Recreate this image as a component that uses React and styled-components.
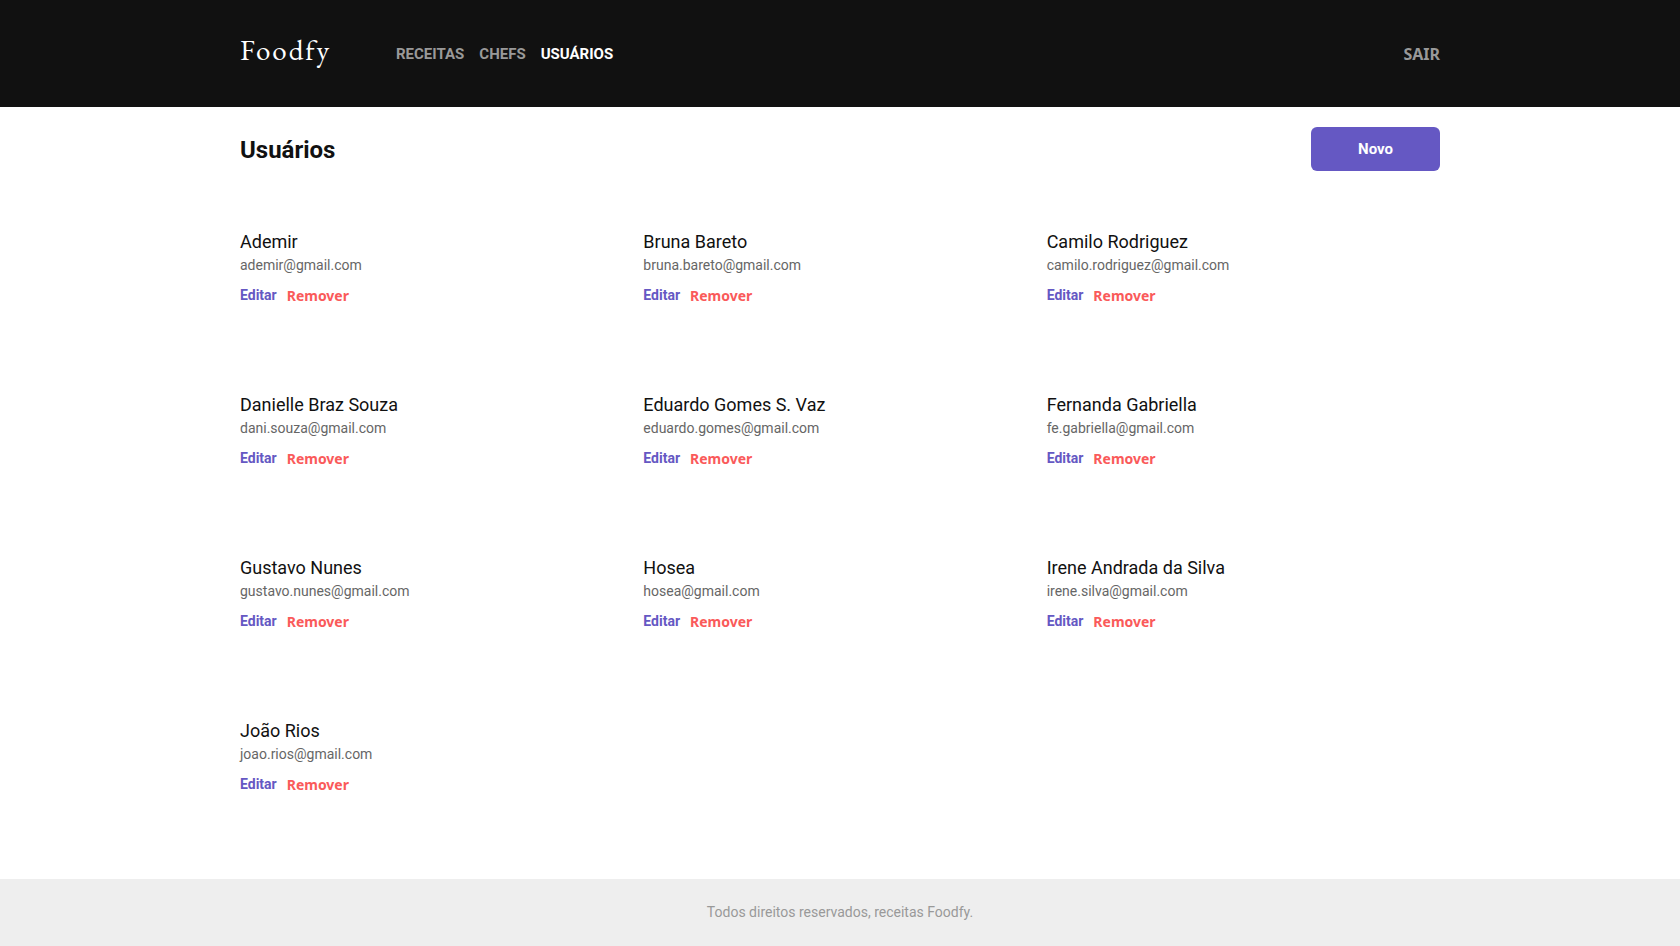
import React from "react";
import styled, { createGlobalStyle } from "styled-components";

const GlobalStyle = createGlobalStyle`
  * { margin: 0; padding: 0; box-sizing: border-box; }
  body {
    background: #fff;
    color: #111;
    font-family: Roboto, "Liberation Sans", sans-serif;
  }
  a { text-decoration: none; }
  button { border: 0; background: none; cursor: pointer; }
`;

const Page = styled.div`
  min-height: 100vh;
  display: flex;
  flex-direction: column;
`;

const Container = styled.div`
  width: 100%;
  max-width: 1200px;
  margin: 0 auto;
`;

const Header = styled.header`
  background: #111;
  padding: 32px 0 31px;
`;

const HeaderRow = styled(Container)`
  display: flex;
  align-items: center;
  min-height: 44px;
`;

const Logo = styled.a`
  align-self: flex-start;
  width: 156px;
  color: #fff;
  font-family: "EB Garamond", "Liberation Serif", serif;
  font-size: 29px;
  line-height: 36px;
  letter-spacing: 2px;
`;

const Nav = styled.nav`
  display: flex;
  flex: 1;
  gap: 15px;
`;

const NavLink = styled.a`
  color: ${({ $active }) => ($active ? "#fff" : "#999")};
  font-size: 15px;
  font-weight: 700;
  line-height: 20px;
`;

const LogoutButton = styled.button`
  color: #999;
  font-family: Tahoma, "Noto Sans", sans-serif;
  font-size: 16px;
  font-weight: 700;
  line-height: 20px;
`;

const Main = styled.main`
  flex: 1;
`;

const TitleRow = styled(Container)`
  display: flex;
  align-items: center;
  justify-content: space-between;
  padding: 20px 0;
`;

const Title = styled.h1`
  padding-top: 2px;
  font-size: 24px;
  font-weight: 700;
  line-height: 28px;
`;

const NewLink = styled.a`
  width: 129px;
  padding: 12px 0;
  border-radius: 6px;
  background: #6558c3;
  color: #fff;
  font-size: 15px;
  font-weight: 700;
  line-height: 20px;
  text-align: center;
`;

const UserGrid = styled(Container).attrs({ as: "ul" })`
  display: grid;
  grid-template-columns: repeat(3, 1fr);
  gap: 10px;
  padding-top: 40px;
  list-style: none;
`;

const UserCard = styled.li`
  min-height: 153px;
`;

const UserName = styled.h2`
  font-size: 18px;
  font-weight: 400;
  line-height: 21px;
`;

const UserEmail = styled.p`
  margin-top: 4px;
  color: #666;
  font-size: 14px;
  line-height: 18px;
`;

const Actions = styled.div`
  display: flex;
  align-items: flex-start;
  gap: 10px;
  margin-top: 11px;
`;

const EditLink = styled.a`
  color: #6558c3;
  font-size: 14px;
  font-weight: 700;
  line-height: 20px;
`;

const RemoveButton = styled.button`
  color: #fa5a5a;
  font-family: Tahoma, "Noto Sans", sans-serif;
  font-size: 14px;
  font-weight: 700;
  line-height: 22px;
`;

const Footer = styled.footer`
  padding: 23px 0 24px;
  background: #eee;
  color: #999;
  font-size: 14px;
  line-height: 20px;
  text-align: center;
`;

const users = [
  ["Ademir", "ademir@gmail.com"],
  ["Bruna Bareto", "bruna.bareto@gmail.com"],
  ["Camilo Rodriguez", "camilo.rodriguez@gmail.com"],
  ["Danielle Braz Souza", "dani.souza@gmail.com"],
  ["Eduardo Gomes S. Vaz", "eduardo.gomes@gmail.com"],
  ["Fernanda Gabriella", "fe.gabriella@gmail.com"],
  ["Gustavo Nunes", "gustavo.nunes@gmail.com"],
  ["Hosea", "hosea@gmail.com"],
  ["Irene Andrada da Silva", "irene.silva@gmail.com"],
  ["João Rios", "joao.rios@gmail.com"],
];

export default function App() {
  return (
    <Page>
      <GlobalStyle />
      <Header>
        <HeaderRow>
          <Logo href="#">Foodfy</Logo>
          <Nav>
            <NavLink href="#receitas">RECEITAS</NavLink>
            <NavLink href="#chefs">CHEFS</NavLink>
            <NavLink href="#usuarios" $active>USUÁRIOS</NavLink>
          </Nav>
          <LogoutButton type="button">SAIR</LogoutButton>
        </HeaderRow>
      </Header>
      <Main>
        <TitleRow>
          <Title>Usuários</Title>
          <NewLink href="#novo">Novo</NewLink>
        </TitleRow>
        <UserGrid>
          {users.map(([name, email]) => (
            <UserCard key={email}>
              <UserName>{name}</UserName>
              <UserEmail>{email}</UserEmail>
              <Actions>
                <EditLink href="#editar">Editar</EditLink>
                <RemoveButton type="button">Remover</RemoveButton>
              </Actions>
            </UserCard>
          ))}
        </UserGrid>
      </Main>
      <Footer>Todos direitos reservados, receitas Foodfy.</Footer>
    </Page>
  );
}
